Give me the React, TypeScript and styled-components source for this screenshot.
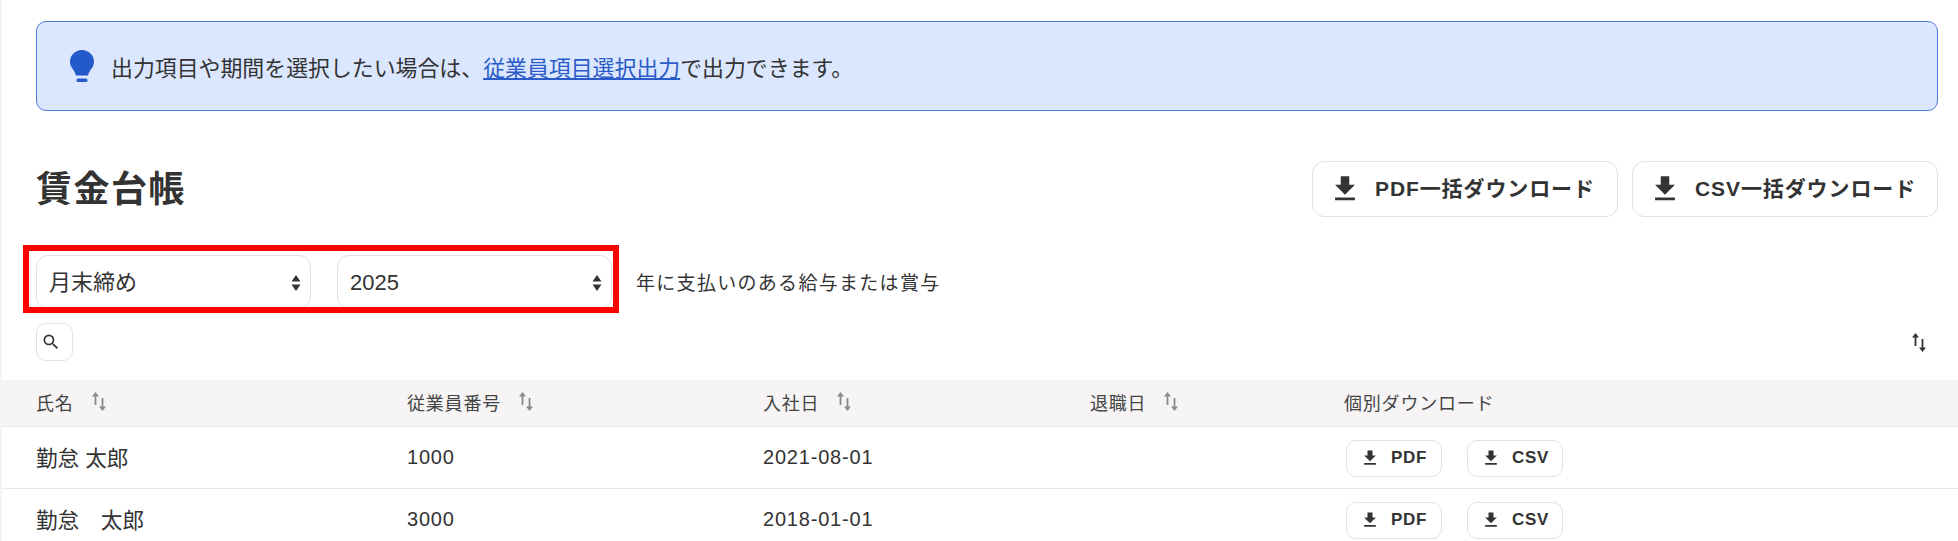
import React from "react";
import styled, { createGlobalStyle } from "styled-components";

const GlobalStyle = createGlobalStyle`
  html, body {
    margin: 0;
    padding: 0;
    background: #ffffff;
    overflow: hidden;
  }
  body {
    font-family: "Liberation Sans", "Noto Sans CJK JP", sans-serif;
    color: #333333;
  }
  * {
    box-sizing: border-box;
  }
`;

const Page = styled.div`
  width: 1958px;
  height: 541px;
  overflow: hidden;
  border-left: 2px solid #f4f4f4;
`;

const Content = styled.div`
  padding: 21px 20px 0 34px;
`;

const Banner = styled.div`
  display: flex;
  align-items: center;
  gap: 17px;
  height: 90px;
  padding-left: 33px;
  background: #dbe7fe;
  border: 1px solid #4f7ad6;
  border-radius: 10px;
  font-size: 21.9px;
`;

const BannerLink = styled.a`
  color: #2a5bc8;
  text-decoration: underline;
`;

const TitleRow = styled.div`
  display: flex;
  align-items: center;
  justify-content: space-between;
  margin-top: 50px;
  height: 56px;
`;

const Title = styled.h1`
  margin: 0 0 7px;
  font-size: 36px;
  font-weight: 700;
  letter-spacing: 1.5px;
  color: #333333;
`;

const ButtonGroup = styled.div`
  display: flex;
  gap: 14px;
`;

const Button = styled.button<{ $small?: boolean }>`
  display: inline-flex;
  align-items: center;
  gap: ${(p) => (p.$small ? "11px" : "13px")};
  height: ${(p) => (p.$small ? "37px" : "56px")};
  width: ${(p) => (p.$small ? "96px" : "306px")};
  padding: 0 0 0 ${(p) => (p.$small ? "13px" : "15px")};
  background: #ffffff;
  border: 1px solid #e2e2e2;
  border-radius: ${(p) => (p.$small ? "10px" : "12px")};
  color: #333333;
  font-family: inherit;
  font-size: ${(p) => (p.$small ? "17px" : "21px")};
  font-weight: 700;
  letter-spacing: ${(p) => (p.$small ? "0.7px" : "0.9px")};
`;

const ButtonLabel = styled.span<{ $small?: boolean }>`
  margin-bottom: ${(p) => (p.$small ? "0" : "4px")};
`;

const FilterRow = styled.div`
  position: relative;
  display: flex;
  align-items: center;
  margin-top: 38px;
  height: 54px;
`;

const SelectWrap = styled.div`
  position: relative;
  width: 275px;
  height: 54px;
  margin-right: 26px;
`;

const Select = styled.select`
  appearance: none;
  width: 100%;
  height: 100%;
  padding: 0 12px;
  background: #ffffff;
  border: 1px solid #e2e2e2;
  border-radius: 12px;
  color: #333333;
  font-family: inherit;
  font-size: 22px;
`;

const SelectArrow = styled.svg`
  position: absolute;
  top: 20px;
  right: 10px;
  width: 10px;
  height: 16px;
  pointer-events: none;
`;

const FilterNote = styled.span`
  font-size: 19px;
  letter-spacing: 1.3px;
  margin: 0 0 2px -2px;
`;

const Highlight = styled.div`
  position: absolute;
  left: -13px;
  top: -10px;
  width: 596px;
  height: 68px;
  border: 6px solid #ff0000;
  pointer-events: none;
`;

const ToolRow = styled.div`
  display: flex;
  align-items: center;
  justify-content: space-between;
  margin-top: 14px;
  height: 38px;
  padding-right: 12px;
`;

const SearchButton = styled.button`
  display: flex;
  align-items: center;
  justify-content: center;
  width: 37px;
  height: 38px;
  padding: 0 7px 0 0;
  background: #ffffff;
  border: 1px solid #e2e2e2;
  border-radius: 10px;
  color: #333333;
`;

const Table = styled.div`
  margin-top: 19px;
`;

const Row = styled.div<{ $head?: boolean }>`
  display: grid;
  grid-template-columns: 371px 356px 327px 254px 1fr;
  align-items: center;
  height: ${(p) => (p.$head ? "47px" : "62px")};
  padding: 0 0 ${(p) => (p.$head ? "3px" : "0")} 34px;
  background: ${(p) => (p.$head ? "#f6f4f5" : "#ffffff")};
  border-bottom: 1px solid #e8e8e8;
  font-size: ${(p) => (p.$head ? "18px" : "20px")};
  letter-spacing: 0.8px;
  color: ${(p) => (p.$head ? "#444444" : "#333333")};
`;

const HeadCell = styled.div`
  display: flex;
  align-items: center;
  gap: 18px;
`;

const NameCell = styled.div`
  font-size: 21.6px;
  letter-spacing: 0;
  margin-bottom: 2px;
`;

const SortIcon = styled.svg<{ $color?: string }>`
  width: 14px;
  height: 19px;
  color: ${(p) => p.$color || "#8a8a8a"};
`;

const Actions = styled.div`
  display: flex;
  gap: 25px;
  margin: 1px 0 0 2px;
`;

const DownloadGlyph = ({ size }: { size: number }) => (
  <svg width={size} height={size} viewBox="0 0 24 24" fill="currentColor">
    <path d="M19 9h-4V3H9v6H5l7 7 7-7zM5 18v2h14v-2H5z" />
  </svg>
);

const Sort = ({ color }: { color?: string }) => (
  <SortIcon $color={color} viewBox="0 0 14 19" fill="currentColor">
    <path d="M3.5 0 7 4.5H4.4V13H2.6V4.5H0z" />
    <path d="M10.5 19 7 14.5h2.6V6h1.8v8.5H14z" />
  </SortIcon>
);

const rows = [
  { name: "勤怠 太郎", no: "1000", date: "2021-08-01" },
  { name: "勤怠　太郎", no: "3000", date: "2018-01-01" },
];

export default function App() {
  return (
    <Page>
      <GlobalStyle />
      <Content>
        <Banner>
          <svg width="24" height="33" viewBox="0 0 24 33" fill="#2359c9">
            <path d="M12 0C5.4 0 0 5.2 0 11.6c0 4.4 2.4 7 4.2 9.6.9 1.3 1.4 2.6 1.6 4.3h12.4c.2-1.7.7-3 1.6-4.3 1.8-2.6 4.2-5.2 4.2-9.6C24 5.2 18.6 0 12 0z" />
            <rect x="6.5" y="28.5" width="11" height="3.5" rx="1.5" />
          </svg>
          <span>
            出力項目や期間を選択したい場合は、
            <BannerLink href="#">従業員項目選択出力</BannerLink>
            で出力できます。
          </span>
        </Banner>
        <TitleRow>
          <Title>賃金台帳</Title>
          <ButtonGroup>
            <Button>
              <DownloadGlyph size={34} />
              <ButtonLabel>PDF一括ダウンロード</ButtonLabel>
            </Button>
            <Button>
              <DownloadGlyph size={34} />
              <ButtonLabel>CSV一括ダウンロード</ButtonLabel>
            </Button>
          </ButtonGroup>
        </TitleRow>
        <FilterRow>
          <SelectWrap>
            <Select defaultValue="月末締め">
              <option>月末締め</option>
            </Select>
            <SelectArrow viewBox="0 0 10 16" fill="#333333">
              <path d="M5 0 9.5 6.5H.5zM5 16 .5 9.5h9z" />
            </SelectArrow>
          </SelectWrap>
          <SelectWrap>
            <Select defaultValue="2025">
              <option>2025</option>
            </Select>
            <SelectArrow viewBox="0 0 10 16" fill="#333333">
              <path d="M5 0 9.5 6.5H.5zM5 16 .5 9.5h9z" />
            </SelectArrow>
          </SelectWrap>
          <FilterNote>年に支払いのある給与または賞与</FilterNote>
          <Highlight />
        </FilterRow>
        <ToolRow>
          <SearchButton>
            <svg width="20" height="20" viewBox="0 0 24 24" fill="currentColor">
              <path d="M15.5 14h-.79l-.28-.27A6.47 6.47 0 0 0 16 9.5 6.5 6.5 0 1 0 9.5 16c1.61 0 3.09-.59 4.23-1.57l.27.28v.79l5 4.99L20.49 19l-4.99-5zm-6 0C7.01 14 5 11.99 5 9.5S7.01 5 9.5 5 14 7.01 14 9.5 11.99 14 9.5 14z" />
            </svg>
          </SearchButton>
          <Sort color="#333333" />
        </ToolRow>
      </Content>
      <Table>
        <Row $head>
          <HeadCell>氏名<Sort /></HeadCell>
          <HeadCell>従業員番号<Sort /></HeadCell>
          <HeadCell>入社日<Sort /></HeadCell>
          <HeadCell>退職日<Sort /></HeadCell>
          <HeadCell>個別ダウンロード</HeadCell>
        </Row>
        {rows.map((r) => (
          <Row key={r.no}>
            <NameCell>{r.name}</NameCell>
            <div>{r.no}</div>
            <div>{r.date}</div>
            <div />
            <Actions>
              <Button $small>
                <DownloadGlyph size={20} />
                <ButtonLabel $small>PDF</ButtonLabel>
              </Button>
              <Button $small>
                <DownloadGlyph size={20} />
                <ButtonLabel $small>CSV</ButtonLabel>
              </Button>
            </Actions>
          </Row>
        ))}
      </Table>
    </Page>
  );
}
